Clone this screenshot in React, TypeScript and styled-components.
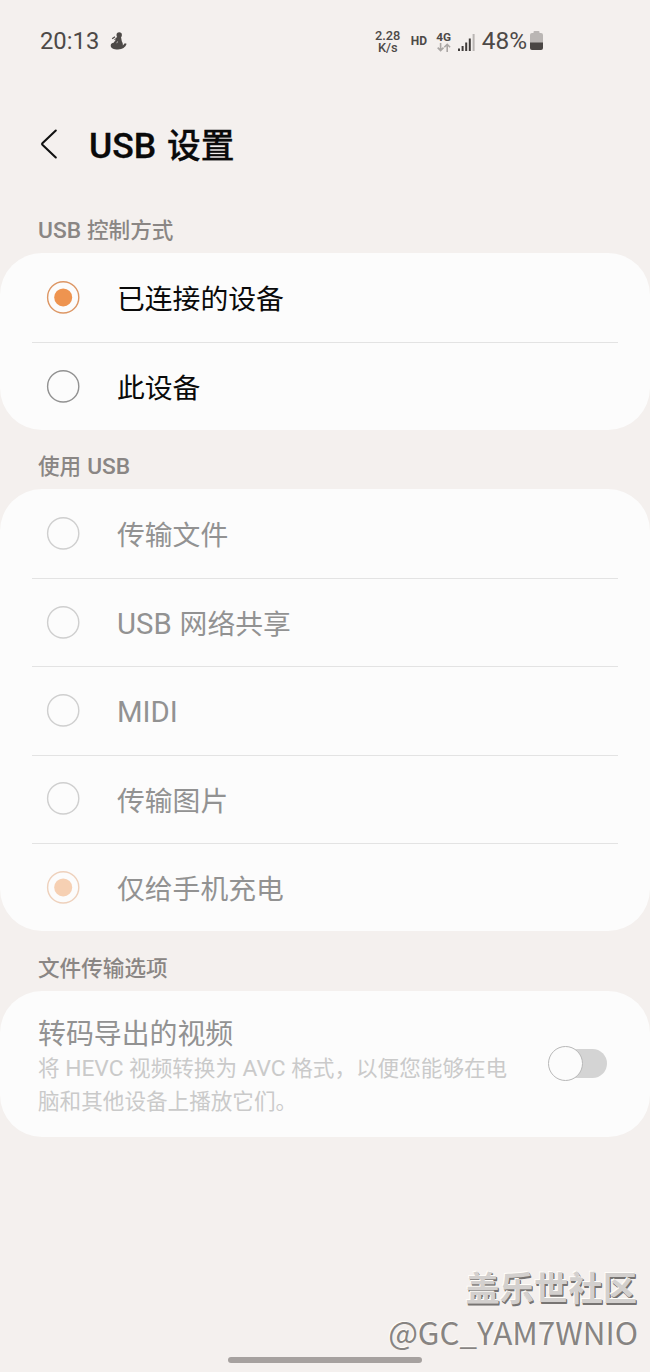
import React, { useState } from 'react';
import styled, { createGlobalStyle } from 'styled-components';

const GlobalStyle = createGlobalStyle`
  *, *::before, *::after { box-sizing: border-box; }
  body { margin: 0; background: #f4f0ee; }
`;

const Screen = styled.div`
  display: flex;
  flex-direction: column;
  position: relative;
  width: 650px;
  height: 1372px;
  overflow: hidden;
  background: #f4f0ee;
  color: #0a0a0a;
  font-family: Roboto, 'Noto Sans CJK SC', sans-serif;
`;

const StatusBar = styled.header`
  display: flex;
  justify-content: space-between;
  align-items: center;
  height: 82px;
  padding: 0 107px 0 40px;
  color: #4d4947;
`;

const StatusGroup = styled.div`
  display: flex;
  align-items: center;
`;

const Clock = styled.span`
  font-size: 23.8px;
  line-height: 28px;
  margin-right: 11px;
`;

const NetSpeed = styled.span`
  width: 28px;
  margin-right: 9px;
  padding-top: 2px;
  font-size: 12.8px;
  line-height: 12px;
  font-weight: 500;
  text-align: center;
`;

const HdBadge = styled.span`
  width: 17px;
  margin-right: 8px;
  font-size: 12px;
  font-weight: 700;
  line-height: 14px;
`;

const NetworkType = styled.span`
  display: flex;
  flex-direction: column;
  align-items: center;
  width: 16px;
  margin-right: 6px;
  padding-top: 1px;
  font-size: 11.8px;
  font-weight: 700;
  line-height: 12px;
`;

const Battery = styled.span`
  margin: 0 3px 0 7px;
  font-size: 24.4px;
  line-height: 28px;
`;

const TitleBar = styled.div`
  display: flex;
  align-items: center;
  height: 126px;
  padding-left: 40px;
`;

const BackButton = styled.button`
  display: flex;
  width: 49px;
  padding: 0 0 2px;
  border: 0;
  background: none;
`;

const Title = styled.h1`
  margin: 0;
  padding-top: 3px;
  font-size: 33.7px;
  font-weight: 500;
  line-height: 44px;
  word-spacing: 2.4px;
  -webkit-text-stroke: 0.3px currentColor;
`;

/* Latin runs are set slightly larger than the Chinese glyphs around them. */
const Latin = styled.span`
  font-size: 1.055em;
  line-height: 1;
`;

const SectionTitle = styled.h2<{ $height: number }>`
  height: ${(p) => p.$height}px;
  margin: 0;
  padding: ${(p) => p.$height - 37}px 0 7px 38px;
  color: #8a8684;
  font-size: 21.6px;
  font-weight: 500;
  line-height: 30px;
  word-spacing: 0.6px;
`;

const Card = styled.section<{ $height: number }>`
  display: flex;
  flex-direction: column;
  height: ${(p) => p.$height}px;
  border-radius: 42px;
  background: #fcfcfc;
`;

const Option = styled.div<{ $disabled?: boolean }>`
  display: flex;
  flex: none;
  align-items: center;
  height: 88.4px;
  margin: 0 32px;
  padding-left: 14px;
  color: ${(p) => (p.$disabled ? '#929292' : '#0a0a0a')};

  &:first-child {
    height: 89px;
  }

  &:last-child {
    flex: 1;
  }

  & + & {
    border-top: 1px solid #e3e3e3;
  }
`;

const RadioSvg = styled.svg<{ $disabled?: boolean }>`
  flex: none;
  margin-right: 37px;
  opacity: ${(p) => (p.$disabled ? 0.42 : 1)};
`;

const OptionLabel = styled.span`
  padding-top: 4.6px;
  font-size: 27.8px;
  line-height: 40px;
  word-spacing: 1px;
`;

const ToggleRow = styled.div`
  display: flex;
  flex: 1;
  align-items: center;
  justify-content: space-between;
  padding: 0 43px 0 38px;
`;

const ToggleText = styled.div`
  display: flex;
  flex-direction: column;
  padding-top: 7px;
`;

const ToggleTitle = styled.span`
  color: #929292;
  font-size: 27.9px;
  line-height: 36px;
`;

const ToggleHint = styled.span`
  color: #cacaca;
  font-size: 21.6px;
  line-height: 32.6px;
  white-space: nowrap;
  word-spacing: 0.2px;
`;

const Switch = styled.span`
  display: flex;
  align-items: center;
  width: 55px;
  height: 29px;
  margin-bottom: 1px;
  border-radius: 15px;
  background: #d4d4d4;

  &::before {
    content: '';
    flex: none;
    width: 35px;
    height: 35px;
    margin-left: -4px;
    border: 1px solid #b8b8b8;
    border-radius: 50%;
    background: #fcfcfc;
  }
`;

const Watermark = styled.div`
  position: absolute;
  right: 12px;
  bottom: 18px;
  display: flex;
  flex-direction: column;
  align-items: flex-end;
  font-family: 'Noto Sans CJK SC', sans-serif;
`;

const Community = styled.span`
  margin-right: 1px;
  color: #d3d0ce;
  font-size: 34.3px;
  font-weight: 700;
  line-height: 47px;
  text-shadow: -1px -1px 0 #fffdf9, 1px 1px 0 #777472, 1px 2px 0 #777472;
`;

const Author = styled.span`
  color: #878482;
  font-size: 31.4px;
  line-height: 44px;
  text-shadow: -1px -1px 0 #fffdf9;
`;

const HomeIndicator = styled.div`
  position: absolute;
  left: 228px;
  bottom: 9px;
  width: 194px;
  height: 6px;
  border-radius: 3px;
  background: #a6a19f;
`;

const Radio = ({ checked, disabled }: { checked?: boolean; disabled?: boolean }) => (
  <RadioSvg width="34" height="34" viewBox="0 0 34 34" fill="none" $disabled={disabled}>
    <circle cx="17.2" cy="16.4" r="15.6" stroke={checked ? '#dd9765' : '#929292'} strokeWidth="1.4" />
    {checked && <circle cx="17.2" cy="16.4" r="9" fill="#ee9450" />}
  </RadioSvg>
);

const NotificationIcon = () => (
  <svg width="17" height="18" viewBox="0 0 17 18" fill="#4d4947">
    <circle cx="9.2" cy="3" r="2.7" />
    <path d="M7 5 11 5 11.8 9.3C12.8 11 13 12.4 12.8 13.6L14.8 11.3 16.6 11.8C15.4 15.4 12.5 17.4 8 17.4 3.6 17.4.7 16 .7 13.7.7 11.6 2.2 10.8 3.6 10.8L6 7.6 3.6 8.3Z" />
    <path d="M2.2 6.8 5 4.8" stroke="#4d4947" strokeWidth="1.4" />
    <path d="M7.6 9.4 6.8 11.2" stroke="#f4f0ee" strokeWidth=".6" fill="none" />
  </svg>
);

const DataArrows = () => (
  <svg width="14" height="9" viewBox="0 0 14 9" fill="none" stroke="#aaa6a4" strokeWidth="1.6">
    <path d="M3.6 0V7.3M.7 4.6 3.6 7.5 6.5 4.6M10.2 9V1.5M7.3 4.2 10.2 1.3 13.1 4.2" />
  </svg>
);

const SignalIcon = () => (
  <svg width="17" height="19" viewBox="0 -2 17 19" fill="#3f3b39">
    <path d="M0 14.5h2V17H0zM3.6 12h2v5h-2zM7.2 8.5h2V17h-2zM10.8 4.5h2V17h-2z" />
    <path d="M14.6 0h2v17h-2z" fill="#b9b5b3" />
  </svg>
);

const BatteryIcon = () => (
  <svg width="13" height="20" viewBox="0 0 13 20">
    <path d="M3.5 2V1q0-1 1-1h4q1 0 1 1v1H11q2 0 2 2v8H0V4q0-2 2-2z" fill="#bab6b4" />
    <path d="M0 11.5h13V17q0 2-2 2H2q-2 0-2-2z" fill="#4a4644" />
  </svg>
);

const BackIcon = () => (
  <svg width="18" height="30" viewBox="0 0 18 30" fill="none" stroke="#111" strokeWidth="2.1" strokeLinecap="round">
    <path d="M15.8 1.5 2.4 14.2q-.8.8 0 1.6L15.8 28.5" />
  </svg>
);

const controllers = ['已连接的设备', '此设备'];
const usages: React.ReactNode[] = [
  '传输文件',
  <><Latin>USB</Latin> 网络共享</>,
  <Latin>MIDI</Latin>,
  '传输图片',
  '仅给手机充电',
];

export default function App() {
  const [controller, setController] = useState(0);

  return (
    <>
      <GlobalStyle />
      <Screen>
        <StatusBar>
          <StatusGroup>
            <Clock>20:13</Clock>
            <NotificationIcon />
          </StatusGroup>
          <StatusGroup>
            <NetSpeed>2.28 K/s</NetSpeed>
            <HdBadge>HD</HdBadge>
            <NetworkType>
              4G
              <DataArrows />
            </NetworkType>
            <SignalIcon />
            <Battery>48%</Battery>
            <BatteryIcon />
          </StatusGroup>
        </StatusBar>
        <TitleBar>
          <BackButton aria-label="返回">
            <BackIcon />
          </BackButton>
          <Title><Latin>USB</Latin> 设置</Title>
        </TitleBar>
        <SectionTitle $height={45}><Latin>USB</Latin> 控制方式</SectionTitle>
        <Card $height={177}>
          {controllers.map((label, i) => (
            <Option key={label} onClick={() => setController(i)}>
              <Radio checked={controller === i} />
              <OptionLabel>{label}</OptionLabel>
            </Option>
          ))}
        </Card>
        <SectionTitle $height={59}>使用 <Latin>USB</Latin></SectionTitle>
        <Card $height={442}>
          {usages.map((label, i) => (
            <Option key={i} $disabled>
              <Radio checked={i === usages.length - 1} disabled />
              <OptionLabel>{label}</OptionLabel>
            </Option>
          ))}
        </Card>
        <SectionTitle $height={60}>文件传输选项</SectionTitle>
        <Card $height={146}>
          <ToggleRow>
            <ToggleText>
              <ToggleTitle>转码导出的视频</ToggleTitle>
              <ToggleHint>
                将 <Latin>HEVC</Latin> 视频转换为 <Latin>AVC</Latin> 格式，以便您能够在电
                <br />
                脑和其他设备上播放它们。
              </ToggleHint>
            </ToggleText>
            <Switch />
          </ToggleRow>
        </Card>
        <Watermark>
          <Community>盖乐世社区</Community>
          <Author>@GC_YAM7WNIO</Author>
        </Watermark>
        <HomeIndicator />
      </Screen>
    </>
  );
}
